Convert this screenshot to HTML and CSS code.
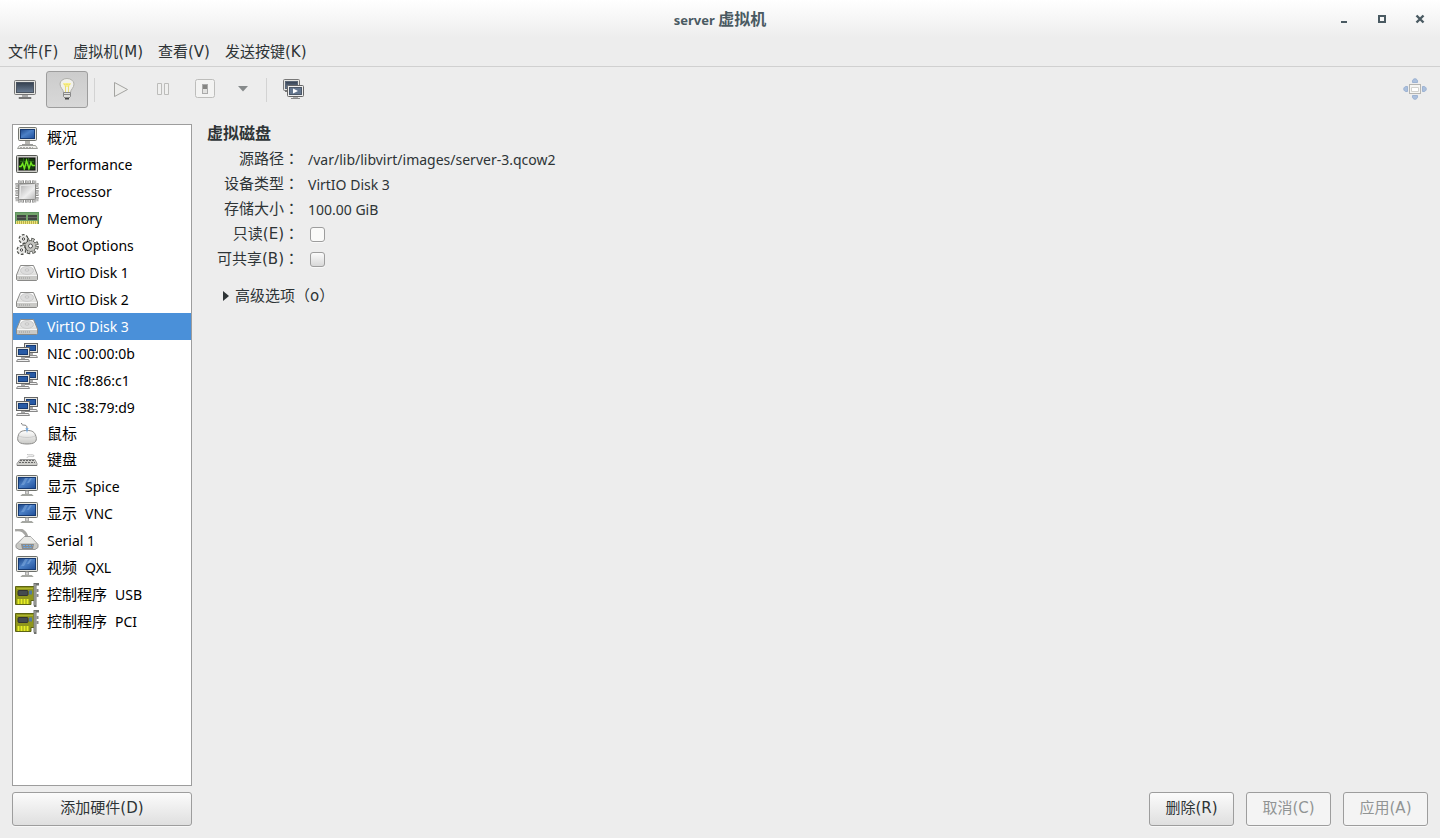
FILE: index.html
```html
<!doctype html>
<html lang="zh-CN">
<head>
<meta charset="utf-8">
<title>server 虚拟机</title>
<link rel="stylesheet" href="styles.css">
</head>
<body>
<svg class="sprite" aria-hidden="true">
	<defs>
		<linearGradient id="blue" x1="0" y1="0" x2="1" y2="1"><stop offset="0" stop-color="#1c4689"/><stop offset=".45" stop-color="#4b80c6"/><stop offset="1" stop-color="#1f4e98"/></linearGradient>
		<linearGradient id="dark" x1="0" y1="0" x2="0" y2="1"><stop offset="0" stop-color="#35404f"/><stop offset="1" stop-color="#6b7d94"/></linearGradient>
		<linearGradient id="metal" x1="0" y1="0" x2="1" y2="1"><stop offset="0" stop-color="#a8a8a8"/><stop offset=".6" stop-color="#eeeeee"/><stop offset="1" stop-color="#b5b5b5"/></linearGradient>
		<linearGradient id="pale" x1="0" y1="0" x2="0" y2="1"><stop offset="0" stop-color="#ffffff"/><stop offset="1" stop-color="#c9c9c6"/></linearGradient>
	</defs>
	<symbol id="computer" viewBox="0 0 24 24">
		<rect x="3.5" y="1.5" width="18" height="13" rx="1" fill="#e6e6e0" stroke="#73756f"/>
		<rect x="5.5" y="3.5" width="14" height="9" fill="url(#blue)" stroke="#163a73"/>
		<path d="M10 15h5v3h-5z" fill="#b5b5b0"/><path d="M7 18.500h11" stroke="#999"/>
		<path d="M4.500 19.500h16l2 3h-20z" fill="#efefec" stroke="#9b9d98"/><path d="M5 21.500h13" stroke="#aaa" stroke-dasharray="2 1"/>
	</symbol>
	<symbol id="monitor" viewBox="0 0 24 24">
		<rect x="1.5" y=".5" width="21" height="15" rx="1" fill="#e6e6e0" stroke="#6d6f6a"/>
		<rect x="3.5" y="2.5" width="17" height="11" fill="url(#blue)" stroke="#163a73"/>
		<path d="M10 3h3l-4 7H6zM15 3h2l-3 5h-2z" fill="#86afe2" opacity=".5"/>
		<path d="M10.500 16h3v3h-3z" fill="#d8d8d4" stroke="#aaa"/><path d="M7 19.500h10l1 1H6z" fill="#eee" stroke="#a5a7a2"/>
	</symbol>
	<symbol id="graph" viewBox="0 0 24 24">
		<rect x="1.5" y="2.5" width="21" height="17" rx="1" fill="#cfcfca" stroke="#555753"/>
		<rect x="4" y="5" width="16" height="12" fill="#153b0c" stroke="#111"/>
		<path d="M5 8.500h14M5 12.500h14M8.500 5v12M13.500 5v12" stroke="#27601a"/>
		<path d="M4 13.500h2l1.500-3 2 5 2-8 2.500 8 2-6 1.500 3H20" fill="none" stroke="#73e821" stroke-width="1.400"/>
	</symbol>
	<symbol id="cpu" viewBox="0 0 24 24">
		<g fill="none" stroke-width="3"><path d="M3 2h18M3 21h18M2 3v18M22 3v18" stroke="#6f6f6d" stroke-dasharray="2.500 1"/><path d="M3.600 2h18M3.600 21h18M2 3.600v18M22 3.600v18" stroke="#d8d8d6" stroke-dasharray="1.200 2.300"/></g>
		<rect x="3.5" y="3.5" width="17" height="16" rx="1" fill="url(#metal)" stroke="#8a8a88"/>
		<path d="M5.500 18V5.500H19" fill="none" stroke="#e4e4e4"/>
	</symbol>
	<symbol id="memory" viewBox="0 0 24 24">
		<rect x=".5" y="5.5" width="23" height="11" fill="#73a46c" stroke="#5f9360"/>
		<path d="M2 8h9v5H2zM13 8h9v5h-9z" fill="#424842"/><path d="M2 10.500h9M13 10.500h9" stroke="#666"/>
		<path d="M1 15.500h22" stroke="#eee67a" stroke-width="3"/><path d="M2 15.500h21" stroke="#b9b04b" stroke-width="3" stroke-dasharray="1 1"/>
	</symbol>
	<symbol id="gears" viewBox="0 0 24 24">
		<g fill="none">
			<circle cx="15.500" cy="12" r="6.500" stroke="#4c4e49" stroke-width="3.500" stroke-dasharray="3.100 2"/>
			<circle cx="15.500" cy="12" r="5.500" fill="#c4c4c0" stroke="#5c5e59"/>
			<circle cx="15.500" cy="12" r="6.200" stroke="#c4c4c0" stroke-width="2.400" stroke-dasharray="1.700 3.170" stroke-dashoffset="-.7"/>
			<circle cx="15.500" cy="12" r="2" fill="#fff" stroke="#555"/>
			<circle cx="8.500" cy="5" r="3.800" stroke="#4c4e49" stroke-width="2.400" stroke-dasharray="2.480 1.500"/>
			<circle cx="8.500" cy="5" r="3.300" fill="#ececea" stroke="#e2e2df" stroke-width="1"/><circle cx="8.500" cy="5" r="1.200" fill="#fff" stroke="#444"/>
			<circle cx="6.500" cy="16" r="3.800" stroke="#4c4e49" stroke-width="2.400" stroke-dasharray="2.480 1.500"/>
			<circle cx="6.500" cy="16" r="3.300" fill="#ececea" stroke="#e2e2df"/><circle cx="6.500" cy="16" r="1.200" fill="#fff" stroke="#444"/>
		</g>
	</symbol>
	<symbol id="disk" viewBox="0 0 24 24">
		<path d="M5.500 4.500h13l4 9.500v4.500l-1 1h-19l-1-1V14z" fill="url(#pale)" stroke="#8a8a88"/>
		<path d="M2 14.500h20v4.500H2z" fill="#c9c9c6"/><path d="M2 14.500h20" stroke="#f5f5f5"/>
		<ellipse cx="12" cy="9.500" rx="6.500" ry="4" fill="#dcdcdc" stroke="#cbcbcb"/><ellipse cx="12" cy="9" rx="2" ry="1" fill="#fff" stroke="#bbb"/>
		<path d="M4 17h12" stroke="#999" stroke-dasharray="1 1"/>
	</symbol>
	<symbol id="network" viewBox="0 0 24 24">
		<g id="pc"><rect x="9.5" y="1.5" width="13" height="9" fill="#e4e4df" stroke="#666"/><rect x="11.5" y="3.5" width="9" height="5" fill="#285ba6" stroke="#163a73"/><path d="M14 11h4v2h-4z" fill="#aaa"/><path d="M10.500 13.500h11l1 2h-13z" fill="#eee" stroke="#888"/></g>
		<use href="#pc" x="-8" y="4"/>
	</symbol>
	<symbol id="mouse" viewBox="0 0 24 24">
		<path d="M6.500 1c0 4 5.500 0 5.500 5v4" fill="none" stroke="#777"/>
		<path d="M3 14.500c1-5 4-6 9-6s7.500 1 9 6c1.500 5.500-2 7.500-9 7.500s-10.500-2-9-7.500z" fill="url(#pale)" stroke="#8a8a88"/>
		<path d="M4 14c4 2 12 2 16 0" fill="none" stroke="#ccc"/><path d="M10.500 6h3L12 11z" fill="#7bade0"/>
	</symbol>
	<symbol id="keyboard" viewBox="0 0 24 24">
		<path d="M12 10c0-3 8 0 7-2.500-1-1.500-5 0-7-1" fill="none" stroke="#c0c0c0"/>
		<path d="M5 11.500h15l2 4v2H2v-2z" fill="#cfcfcb" stroke="#999"/><path d="M5 12.500h14M4 14.500h16" stroke="#666" stroke-dasharray="2 1"/>
		<path d="M2 17.500h20" stroke="#777"/>
	</symbol>
	<symbol id="serial" viewBox="0 0 24 24">
		<path d="M0 1c6-1 11 1 12 8" fill="none" stroke="#a5a5a2" stroke-width="3"/>
		<path d="M9.500 7.500h6l7.500 8v3l-3 2H4l-3-2v-3z" fill="#c9c9c5" stroke="#999"/>
		<path d="M9 8l-5 6h17l-5-6z" fill="#e8e8e5"/><path d="M6 15h13l-1 5H7z" fill="#8b8b89"/>
		<path d="M8 16.500h10M8.500 18.500h9" stroke="#69a7e8" stroke-dasharray="2 1"/>
	</symbol>
	<symbol id="card" viewBox="0 0 24 24">
		<path d="M.5 3.500H20v14h-4v4H.500z" fill="#8f961d" stroke="#5d6412"/><path d="M2 5.500h16" stroke="#aeb52e"/>
		<rect x="3" y="7.500" width="10" height="5" rx="1" fill="#454b4e" stroke="#333"/><path d="M14 7.500h3v4h-3z" fill="#53799b"/>
		<path d="M3.500 21v-5M6.500 21v-5M9.500 21v-5M12.500 21v-5" stroke="#e7ef26" stroke-width="2"/>
		<path d="M24 1h-4v21.500h-1" fill="none" stroke="#6f716d" stroke-width="3"/><path d="M20 1v21" stroke="#b8bab5"/><path d="M22.500 6v3M22.500 11v3" stroke="#888" stroke-width="2"/>
	</symbol>
</svg>

<header class="titlebar">
	<h1>server <span>虚拟机</span></h1>
	<div class="winbtns">
		<button type="button" aria-label="最小化"><svg width="10" height="10"><path d="M2 7h6v2H2z" fill="#4a5a62"/></svg></button>
		<button type="button" aria-label="最大化"><svg width="10" height="10"><path d="M2 2h6v6H2z" fill="none" stroke="#4a5a62" stroke-width="2"/></svg></button>
		<button type="button" aria-label="关闭"><svg width="10" height="10"><path d="M1.500 1.500l7 7M8.500 1.500l-7 7" stroke="#4a5a62" stroke-width="2.400"/></svg></button>
	</div>
</header>

<nav class="menubar">
	<button type="button">文件(F)</button>
	<button type="button">虚拟机(M)</button>
	<button type="button">查看(V)</button>
	<button type="button">发送按键(K)</button>
</nav>

<div class="toolbar">
	<button type="button" aria-label="控制台"><svg width="24" height="24">
		<rect x="1.5" y="3.5" width="21" height="14" rx="1" fill="#e5e5e1" stroke="#777"/><rect x="3.5" y="5.5" width="17" height="10" fill="url(#dark)" stroke="#4a5360"/><path d="M9 18h6v2H9z" fill="#aaa"/><path d="M6 20.500h12v1H6z" fill="#ddd" stroke="#777"/></svg></button>
	<button type="button" class="on" aria-label="详情"><svg width="24" height="24">
		<path d="M8.500 15.500c0-3-3.500-4.500-3.500-8.500a7 5.500 0 0 1 14 0c0 4-3.500 5.500-3.500 8.500z" fill="#f1f1ec" stroke="#b0b0ab"/>
		<path d="M8 6h8l-2 4h-4z" fill="#fbf28b"/><path d="M8.500 7l2 1 1.500-1 1.500 1 2-1M10.500 9v6M13.500 9v6" fill="none" stroke="#e8dd77"/>
		<path d="M8.500 15.500h7v4l-2 2h-3l-2-2z" fill="#e0e0dd" stroke="#888"/><path d="M8 17.500h8" stroke="#888"/><path d="M10 21.500h4" stroke="#444" stroke-width="2"/></svg></button>
	<span class="sep"></span>
	<button type="button" disabled aria-label="运行"><svg width="24" height="24"><path d="M5.500 5.500v14l13-7z" fill="#ededeb" stroke="#a4a4a1" stroke-linejoin="round"/></svg></button>
	<button type="button" disabled aria-label="暂停"><svg width="24" height="24"><path d="M6.500 6.500h4v11h-4zM13.500 6.500h4v11h-4z" fill="#f0f0ef" stroke="#bcbcba"/></svg></button>
	<button type="button" disabled aria-label="关机"><svg width="24" height="24"><rect x="2.5" y="2.5" width="19" height="18" rx="2" fill="#f3f3f2" stroke="#bdbdbb"/><rect x="9.5" y="7.5" width="5" height="9" fill="#858583" stroke="#aaa"/><path d="M10 12h4v4h-4z" fill="#e2e2e0"/></svg></button>
	<button type="button" disabled class="drop" aria-label="关机选项"><svg width="10" height="6"><path d="M0 0h10L5 5.500z" fill="#868a8b"/></svg></button>
	<span class="sep"></span>
	<button type="button" aria-label="快照"><svg width="24" height="24">
		<rect x="2.5" y="2.5" width="16" height="11" rx="1" fill="#e5e5e1" stroke="#777"/><rect x="4.5" y="4.5" width="12" height="7" fill="url(#dark)" stroke="#596575"/><path d="M4 14.500h4" stroke="#777"/>
		<rect x="6.5" y="8.5" width="16" height="11" rx="1" fill="#eee" stroke="#666"/><rect x="8.5" y="10.500" width="12" height="7" fill="#64768e" stroke="#4c5868"/><path d="M12 11.500v5l5-2.500z" fill="#fff"/><path d="M12 20h5v1h-5z" fill="#aaa"/><path d="M10 21.500h9" stroke="#888"/></svg></button>
	<button type="button" disabled class="full" aria-label="全屏"><svg width="24" height="24">
		<g fill="#abc0dd" stroke="#9db3d3"><path d="M9.500 5.500c-1-5 6-5 5 0zM9.500 18.500c-1 5 6 5 5 0zM4.500 9.500c-5-1-5 6 0 5zM19.500 9.500c5-1 5 6 0 5z"/></g>
		<rect x="6.5" y="7.5" width="11" height="9" fill="#f5f5f3" stroke="#b5b5b2"/><path d="M8.500 10.500h7v4h-7z" fill="#fff" stroke="#d2d2ce"/></svg></button>
</div>

<main>
	<aside>
		<ul class="hardware">
			<li class="short"><a href="#"><svg><use href="#computer"/></svg><span>概况</span></a></li>
			<li><a href="#"><svg><use href="#graph"/></svg>Performance</a></li>
			<li><a href="#"><svg><use href="#cpu"/></svg>Processor</a></li>
			<li><a href="#"><svg><use href="#memory"/></svg>Memory</a></li>
			<li><a href="#"><svg><use href="#gears"/></svg>Boot Options</a></li>
			<li><a href="#"><svg><use href="#disk"/></svg>VirtIO Disk 1</a></li>
			<li><a href="#"><svg><use href="#disk"/></svg>VirtIO Disk 2</a></li>
			<li class="ac"><a href="#"><svg><use href="#disk"/></svg>VirtIO Disk 3</a></li>
			<li><a href="#"><svg><use href="#network"/></svg>NIC :00:00:0b</a></li>
			<li><a href="#"><svg><use href="#network"/></svg>NIC :f8:86:c1</a></li>
			<li><a href="#"><svg><use href="#network"/></svg>NIC :38:79:d9</a></li>
			<li class="short"><a href="#"><svg><use href="#mouse"/></svg><span>鼠标</span></a></li>
			<li class="short"><a href="#"><svg><use href="#keyboard"/></svg><span>键盘</span></a></li>
			<li><a href="#"><svg><use href="#monitor"/></svg><span>显示</span>Spice</a></li>
			<li><a href="#"><svg><use href="#monitor"/></svg><span>显示</span>VNC</a></li>
			<li><a href="#"><svg><use href="#serial"/></svg>Serial 1</a></li>
			<li><a href="#"><svg><use href="#monitor"/></svg><span>视频</span>QXL</a></li>
			<li><a href="#"><svg><use href="#card"/></svg><span>控制程序</span>USB</a></li>
			<li><a href="#"><svg><use href="#card"/></svg><span>控制程序</span>PCI</a></li>
		</ul>
		<button type="button" class="btn">添加硬件(D)</button>
	</aside>

	<section class="detail">
		<h2>虚拟磁盘</h2>
		<div class="form">
			<span class="name">源路径<i lang="zh-TW">：</i></span><span class="value">/var/lib/libvirt/images/server-3.qcow2</span>
			<span class="name">设备类型<i lang="zh-TW">：</i></span><span class="value">VirtIO Disk 3</span>
			<span class="name">存储大小<i lang="zh-TW">：</i></span><span class="value">100.00 GiB</span>
			<label class="name" for="readonly">只读(E)<i lang="zh-TW">：</i></label><input type="checkbox" id="readonly">
			<label class="name" for="share">可共享(B)<i lang="zh-TW">：</i></label><input type="checkbox" id="share" class="grad">
		</div>
		<details>
			<summary><svg width="6" height="10"><path d="M0 0v10l6-5z" fill="#2e3436"/></svg>高级选项（o）</summary>
		</details>
		<div class="actions">
			<button type="button" class="btn">删除(R)</button>
			<button type="button" class="btn" disabled>取消(C)</button>
			<button type="button" class="btn" disabled>应用(A)</button>
		</div>
	</section>
</main>
</body>
</html>
```
FILE: styles.css
```css
*{ margin:0; padding:0; box-sizing:border-box}
body{ display:flex; flex-direction:column; min-height:100vh; background:#ededed linear-gradient(#fff,#ededed) no-repeat 0 0/100% 38px; color:#2e3436; font:14px/24px "Noto Sans","Noto Sans CJK SC",sans-serif;}
button{ border:0; background:none; color:inherit; font:inherit;}
ul{ list-style:none}
a{ color:inherit; text-decoration:none;}
i{ font-style:normal; font-family:"Noto Sans CJK TC",sans-serif;}
svg{ display:block; flex:none;}
.sprite{ position:absolute; width:0; height:0;}

.titlebar{ position:relative; display:flex; justify-content:center; align-items:center; height:38px;}
.titlebar h1{ font-size:13px; color:#4a5a62;}
.titlebar h1 span{ font-size:16px;}
.winbtns{ position:absolute; right:15px; top:14px; display:flex; gap:28px;}

.menubar{ display:flex; gap:15px; height:29px; padding:0 8px; border-bottom:1px solid #d0d0d0;}
.menubar,.btn,.name,details{ font-family:"DejaVu Sans","Noto Sans CJK SC",sans-serif; font-size:15px;}

.toolbar{ display:flex; align-items:center; height:45px; padding:0 4px;}
.toolbar button{ display:flex; justify-content:center; align-items:center; width:42px; height:37px; padding-bottom:2px; border-radius:3px;}
.toolbar .on{ border:1px solid #9d9d9d; background:linear-gradient(#ccc,#d8d8d8);}
.toolbar .sep{ width:1px; height:24px; margin:0 5px 0 6px; background:#d3d3d3;}
.toolbar .drop{ width:34px;}
.toolbar .full{ margin-left:auto;}

main{ flex:1; display:flex; gap:15px; padding:12px;}
aside{ display:flex; flex-direction:column; gap:6px; width:180px;}
.hardware{ flex:1; border:1px solid #9d9d9d; background:#fff; color:#000;}
.hardware a{ display:flex; align-items:center; gap:8px; height:27px; padding:0 2px; white-space:nowrap;}
.hardware .short a{ height:26px;}
.hardware span{ padding-bottom:2px; font-size:15px;}
.hardware svg{ width:24px; height:24px;}
.hardware .ac{ background:#4a90d9; color:#fff;}

.btn{ height:34px; padding:0 0 2px; border:1px solid #9d9d9d; border-radius:3px; background:linear-gradient(#fbfbfb,#dfdfdf); box-shadow:0 1px #f8f8f8;}
.btn:disabled{ background:#f4f4f4; color:#919494;}

.detail{ flex:1; display:flex; flex-direction:column;}
.detail h2{ height:22px; font-size:16px; line-height:18px;}
.form{ display:grid; grid-template-columns:92px 1fr; grid-auto-rows:25px; column-gap:9px; align-items:center;}
.form .name{ text-align:right; white-space:nowrap;}
.form .value{ padding-top:3px;}
.form input{ appearance:none; width:15px; height:15px; margin:2px 0 0 2px; border:1px solid #9d9d9d; border-radius:3px; background:#fafaf9; box-shadow:0 1px #f8f8f8;}
.form .grad{ background:linear-gradient(#fbfbfb,#d8d8d8);}
details{ margin-top:13px; padding-left:16px;}
summary{ display:flex; align-items:center; gap:6px; list-style:none;}
.actions{ display:flex; justify-content:flex-end; gap:12px; margin-top:auto;}
.actions .btn{ width:85px;}
```
